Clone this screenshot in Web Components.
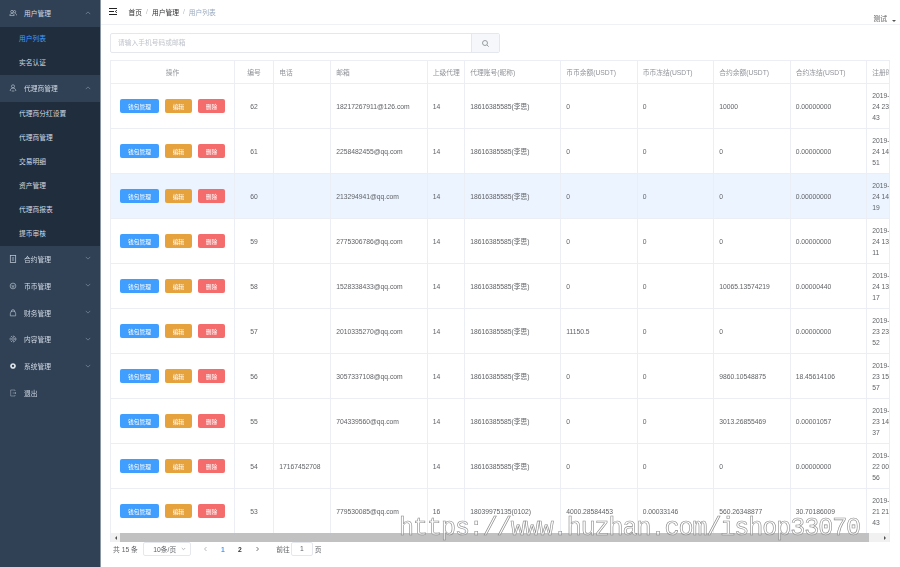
<!DOCTYPE html>
<html lang="zh"><head><meta charset="utf-8"><title>用户列表</title>
<style>
html,body{margin:0;height:100%;overflow:hidden;background:#fff}
body{font-family:"Liberation Sans","Noto Sans CJK SC",sans-serif;font-size:6.75px;color:#606266}
</style></head><body>
<admin-app></admin-app>
<script>
const ICONS={
 users:'<circle cx="4.500" cy="4" r="2"/><circle cx="8.400" cy="4" r="1.700"/><path d="M1.200 9.800c0-2 1.500-3.200 3.300-3.200s3.300 1.200 3.300 3.200zM9 6.500c1.500 0 2.300 1.200 2.300 3"/>',
 user:'<circle cx="6" cy="3.500" r="2.300"/><path d="M1.800 10.500c0-2.800 1.800-4.500 4.200-4.500s4.200 1.700 4.200 4.500M4 10.500h4"/>',
 doc:'<rect x="2" y=".8" width="8" height="10.400" stroke-width="1.200"/><path d="M4.300 4.500h3.400M4.300 7.500h3.400" stroke-width="1.200"/>',
 coin:'<circle cx="6" cy="6" r="4.300"/><path d="M3.800 4.300L6 7l2.200-2.700M4 7.500h4"/>',
 lock:'<path d="M2 10.300V7a4 4 0 0 1 8 0v3.300zM3.500 4V3.500a2.500 2.500 0 0 1 5 0V4"/>',
 cog:'<circle cx="6" cy="6" r="2"/><circle cx="6" cy="6" r="4.300" stroke-dasharray="2.500 1.500" stroke-width="1.300"/>',
 sys:'<circle cx="6" cy="6" r="3" stroke="#dfe4ea" stroke-width="2.600"/>',
 exit:'<path d="M9 3V1.500H2.500v9H9V9M5.500 6H10.500M9 4.500L10.500 6 9 7.500" opacity=".7"/>'
};
class AdminApp extends HTMLElement{
 connectedCallback(){
  const r=this.attachShadow({mode:'open'});
  r.innerHTML=`<style>
  :host{display:flex;width:900px;height:567px;overflow:hidden;filter:blur(.3px)}
  main{flex:1;min-width:0;display:flex;flex-direction:column}
  .content{padding:8px 10px 0 9px;display:flex;flex-direction:column;gap:7px;flex:1;min-height:0}
  </style>
  <side-bar></side-bar>
  <main><top-bar></top-bar><div class="content"><search-box placeholder="请输入手机号码或邮箱"></search-box><data-table></data-table><pager-bar></pager-bar></div></main>
  <water-mark>https://www.huzhan.com/ishop33070</water-mark>`;
 }
}
class SideBar extends HTMLElement{
 connectedCallback(){
  const r=this.attachShadow({mode:'open'});
  const head=(ic,t,open)=>`<div class="h"><svg viewBox="0 0 12 12"  class="i">${ICONS[ic]}</svg><span>${t}</span>${ic==='exit'?'':`<svg class="c" viewBox="0 0 8 5"><path d="${open?'M1 4l3-3 3 3':'M1 1l3 3 3-3'}"/></svg>`}</div>`;
  const sub=(t,a)=>`<div class="s${a?' a':''}">${t}</div>`;
  r.innerHTML=`<style>
  :host{display:block;width:100px;flex:none;height:567px;background:#304156;border-right:1px solid #8b96a3;box-sizing:content-box;color:#d0d9e3;font-size:6.75px;overflow:hidden}
  .h{display:flex;align-items:center;padding-left:9px;position:relative;height:26.800px}
  .h span{margin-left:7px}
  .i{width:8px;height:8px;fill:none;stroke:#b8c2ce;stroke-width:1;flex:none}
  .c{position:absolute;left:85px;top:50%;margin-top:-2.500px;width:6px;height:4px;fill:none;stroke:#8e9aa8;stroke-width:.8}
  .s{height:24px;line-height:24px;background:#1f2d3d;padding-left:19px}
  .a{color:#409eff}
  </style>
  ${head('users','用户管理',1)}${sub('用户列表',1)}${sub('实名认证')}
  ${head('user','代理商管理',1)}${sub('代理商分红设置')}${sub('代理商管理')}${sub('交易明细')}${sub('资产管理')}${sub('代理商报表')}${sub('提币审核')}
  ${head('doc','合约管理')}${head('coin','币币管理')}${head('lock','财务管理')}${head('cog','内容管理')}${head('sys','系统管理')}${head('exit','退出')}`;
 }
}
class TopBar extends HTMLElement{
 connectedCallback(){
  const r=this.attachShadow({mode:'open'});
  r.innerHTML=`<style>
  :host{display:flex;align-items:center;height:25px;box-sizing:border-box;border-bottom:1px solid #eff1f4;flex:none;position:relative;font-size:6.75px;color:#303133}
  svg{width:8px;height:7px;margin-left:8px;margin-right:11.500px;stroke:#222;fill:none;stroke-width:1;position:relative;top:-0.500px}
  .b{display:flex;gap:4px;align-items:center;flex:1;position:relative;top:-0.500px}
  i{font-style:normal;color:#b4b8bf}.l{color:#97a8be}
  .u{position:absolute;right:4px;top:15px;line-height:8px;color:#555}
  .u::after{content:"";display:inline-block;border:2px solid transparent;border-top:2.500px solid #555;border-bottom:0;margin-left:5px;vertical-align:-1px}
  </style>
  <svg viewBox="0 0 8 7"><path d="M0 .5h8M0 3.500h5M0 6.500h8M7.800 2.300L6.300 3.500l1.500 1.200"/></svg>
  <div class="b"><span>首页</span><i>/</i><span>用户管理</span><i>/</i><span class="l">用户列表</span></div><div class="u">测试</div>`;
 }
}
class SearchBox extends HTMLElement{
 connectedCallback(){
  const r=this.attachShadow({mode:'open'});
  r.innerHTML=`<style>
  :host{display:flex;width:390px;height:20px;border:1px solid #e4e7ed;border-radius:2px;box-sizing:border-box;flex:none;font-size:6.75px}
  .p{flex:1;padding-left:7px;color:#c0c4cc;line-height:18px}
  .b{width:27.500px;background:#f5f7fa;border-left:1px solid #e4e7ed;display:flex;align-items:center;justify-content:center}
  svg{width:7px;height:7px;fill:none;stroke:#83868c;stroke-width:.8}
  </style><div class="p">${this.getAttribute('placeholder')}</div>
  <div class="b"><svg viewBox="0 0 7 7"><circle cx="3" cy="3" r="2.500"/><path d="M5 5l1.700 1.700"/></svg></div>`;
 }
}
class ActionButton extends HTMLElement{
 connectedCallback(){
  const r=this.attachShadow({mode:'open'});
  r.innerHTML=`<style>
  :host{display:inline-flex;align-items:center;justify-content:center;height:14px;border-radius:2px;color:#fff;font-size:5.750px;flex:none;background:var(--bg);width:var(--w)}
  </style><slot></slot>`;
 }
}
class DataTable extends HTMLElement{
 connectedCallback(){
  const r=this.attachShadow({mode:'open'});
  const cols=[124,39,57,96.500,37.500,96,76.500,76.500,76.500,76.500,45];
  const H=['操作','编号','电话','邮箱','上级代理','代理账号(昵称)','币币余额(USDT)','币币冻结(USDT)','合约余额(USDT)','合约冻结(USDT)','注册时间'];
  const nick='18616385585(李思)';
  const Z='0.00000000';
  const D=[
  [62,'','18217267911@126.com',14,nick,0,0,'10000',Z,'24 23:11:','43'],
  [61,'','2258482455@qq.com',14,nick,0,0,0,Z,'24 14:11:','51'],
  [60,'','213294941@qq.com',14,nick,0,0,0,Z,'24 14:11:','19'],
  [59,'','2775306786@qq.com',14,nick,0,0,0,Z,'24 13:11:','11'],
  [58,'','1528338433@qq.com',14,nick,0,0,'10065.13574219','0.00000440','24 13:11:','17'],
  [57,'','2010335270@qq.com',14,nick,'11150.5',0,0,Z,'23 23:21:','52'],
  [56,'','3057337108@qq.com',14,nick,0,0,'9860.10548875','18.45614106','23 15:11:','57'],
  [55,'','704339560@qq.com',14,nick,0,0,'3013.26855469','0.00001057','23 14:11:','37'],
  [54,'17167452708','',14,nick,0,0,0,Z,'22 00:01:','56'],
  [53,'','779530085@qq.com',16,'18039975135(0102)','4000.28584453','0.00033146','560.26348877','30.70186009','21 21:11:','43']];
  const grid=cols.map(c=>`<col style="width:${c}px">`).join('');
  const ops=`<div class="ops"><action-button style="--bg:#409eff;--w:38.500px">钱包管理</action-button><action-button style="--bg:#e6a23c;--w:27px">编辑</action-button><action-button style="--bg:#f56c6c;--w:27px">删除</action-button></div>`;
  const rows=D.map((d,i)=>`<tr class="${i==2?'hl':''}"><td>${ops}</td><td class="m">${d[0]}</td>${d.slice(1,9).map(v=>`<td>${v}</td>`).join('')}<td class="t">2019-04-<br>${d[9]}<br>${d[10]}</td></tr>`).join('');
  r.innerHTML=`<style>
  :host{display:flex;flex-direction:column;width:780px;height:482px;flex:none;overflow:hidden;border:1px solid #ebeef5;border-bottom:0;box-sizing:border-box;font-size:6.75px;color:#606266}
  .w{overflow:hidden;flex:1;min-height:0}
  table{border-collapse:collapse;table-layout:fixed;width:${cols.reduce((a,b)=>a+b,0)}px;margin:-1px 0 0 -1px}
  th,td{border:1px solid #ebeef5;padding:0 5.200px;text-align:left;font-weight:400;overflow:hidden;white-space:nowrap;box-sizing:border-box}
  th{height:23px;color:#909399}
  td{height:45px}
  th:first-child,th:nth-child(2),.m{text-align:center}
  .t{line-height:11px}
  .hl td{background:#ecf5ff}
  .ops{display:flex;gap:6.200px;padding-left:4px}
  .bar{height:9px;background:#f1f1f1;display:flex;align-items:center;flex:none}
  .ar{width:9px;height:9px;display:flex;align-items:center;justify-content:center;flex:none}
  .ar::before{content:"";border:2px solid transparent}
  .ar.l::before{border-right-color:#505050;border-left:0}
  .ar.r::before{border-left-color:#505050;border-right:0}
  .th{width:749px;height:9px;background:#c1c1c1;flex:none}
  .sp{flex:1}
  </style><div class="w"><table><colgroup>${grid}</colgroup><thead><tr>${H.map(h=>`<th>${h}</th>`).join('')}</tr></thead><tbody>${rows}</tbody></table></div>
  <div class="bar"><span class="ar l"></span><span class="th"></span><span class="sp"></span><span class="ar r"></span></div>`;
 }
}
class PagerBar extends HTMLElement{
 connectedCallback(){
  const r=this.attachShadow({mode:'open'});
  r.innerHTML=`<style>
  :host{display:flex;align-items:center;height:13px;margin-top:-6.500px;padding-left:3px;font-size:6.75px;color:#606266;flex:none}
  .sel{width:48px;height:13.500px;border:1px solid #e4e7ed;border-radius:2px;box-sizing:border-box;margin-left:5.500px;display:flex;align-items:center;justify-content:space-between;padding:0 4px 0 9px}
  svg{fill:none;stroke:#a4a8af;stroke-width:.8;width:5px;height:6px;flex:none}
  .n{color:#303133;font-weight:700;width:17px;text-align:center}
  .on{color:#409eff}
  .inp{width:22px;height:13.500px;border:1px solid #e4e7ed;border-radius:2px;box-sizing:border-box;text-align:center;line-height:11.500px;margin:0 2px 0 1px}
  </style><span>共 15 条</span><div class="sel"><span>10条/页</span><svg viewBox="0 0 5 6"><path d="M.8 2l1.700 1.700L4.200 2"/></svg></div>
  <svg viewBox="0 0 5 6" style="margin-left:12px;margin-right:6px"><path d="M3.500 1L1.500 3l2 2"/></svg>
  <span class="n on">1</span><span class="n">2</span>
  <svg viewBox="0 0 5 6" style="margin-left:7px;margin-right:16px;stroke:#555"><path d="M1.500 1l2 2-2 2"/></svg>
  <span>前往</span><div class="inp">1</div><span>页</span>`;
 }
}
class WaterMark extends HTMLElement{
 connectedCallback(){
  const r=this.attachShadow({mode:'open'});
  r.innerHTML=`<style>
  :host{position:absolute;left:399px;top:514px;font:25px/30px "Liberation Mono",monospace;letter-spacing:-1.030px;color:rgba(255,255,255,.55);-webkit-text-stroke:.6px #8a8a8a;white-space:nowrap;pointer-events:none}
  </style><slot></slot>`;
 }
}
customElements.define('admin-app',AdminApp);
customElements.define('side-bar',SideBar);
customElements.define('top-bar',TopBar);
customElements.define('search-box',SearchBox);
customElements.define('action-button',ActionButton);
customElements.define('data-table',DataTable);
customElements.define('pager-bar',PagerBar);
customElements.define('water-mark',WaterMark);
</script></body></html>
